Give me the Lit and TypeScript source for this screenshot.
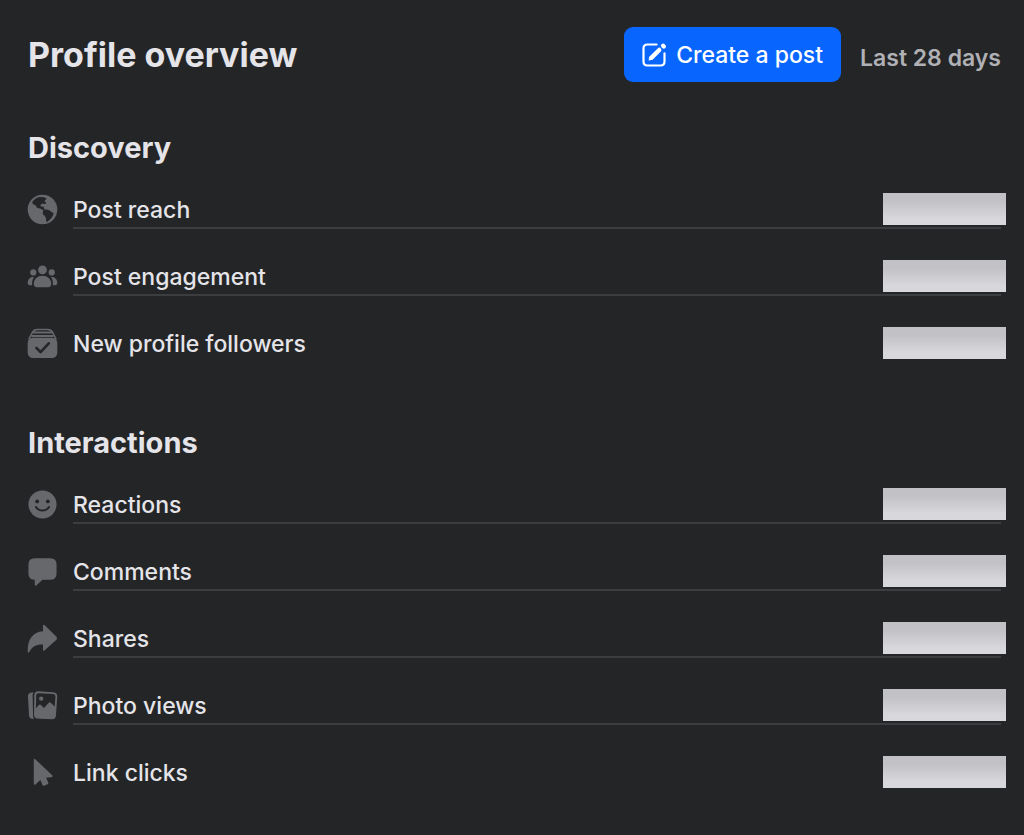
import { LitElement, html, svg, css, SVGTemplateResult } from "lit";
import { customElement, property } from "lit/decorators.js";

const icons: Record<string, SVGTemplateResult> = {
  globe: svg`
    <circle cx="16" cy="16" r="15.3" fill="currentColor" />
    <path fill="#242527" d="M5.200 8.800C6.800 5.800 9.500 3.800 12.800 3L17.600 3.400L20.200 4.600L19 6.200L17.800 7.400L19.800 8.800L19.400 10L17.400 10.400L16.200 9.800L14.200 10.800L13.800 12.400L15.400 13.200L17 13L17.400 14.800L18.600 16.200L20.600 16L23.400 17L25.200 18.600L27.400 19.600L26.800 22.200L25 25L22.600 27.400L20.800 28.800L19.600 27.800L19.800 25.200L18.400 22.800L16.400 21L16.200 18.600L17.200 17L15.400 16L13.600 15L11.400 14.800L9.600 13.400L8.800 11.400L7 11.200Z" />`,
  people: svg`
    <g fill="currentColor">
      <circle cx="16" cy="9.200" r="4.500" />
      <circle cx="6.500" cy="11.800" r="3.200" />
      <circle cx="25.500" cy="11.800" r="3.200" />
      <path d="M16 15.200C20.800 15.200 25 18.500 25 23.500C25 25.800 23.800 27 21.800 27H10.200C8.200 27 7 25.800 7 23.500C7 18.500 11.200 15.200 16 15.200Z" />
      <path d="M7.200 16.600C4 15.700 0.700 18.600 0.700 22.500C0.700 24.200 1.500 25 2.700 25H5.300C5 21.800 5.600 19 7.200 16.600Z" />
      <path d="M24.800 16.600C28 15.700 31.300 18.600 31.300 22.500C31.300 24.200 30.500 25 29.300 25H26.700C27 21.800 26.400 19 24.800 16.600Z" />
    </g>`,
  followers: svg`
    <rect x="0.700" y="10" width="30.600" height="21" rx="5.500" fill="currentColor" />
    <path d="M1.800 12L5.500 4.500Q7.500 1.500 10.500 1.500H21.500Q24.500 1.500 26.500 4.500L30.200 12" fill="none" stroke="currentColor" stroke-width="1.600" />
    <path d="M6 4.600H26M4.500 8.200H27.500" stroke="currentColor" stroke-width="2" />
    <path d="M9.700 20.500L14 25L22.500 15.800" fill="none" stroke="#242527" stroke-width="2.700" stroke-linecap="round" stroke-linejoin="round" />`,
  smile: svg`
    <circle cx="16" cy="16" r="14.500" fill="currentColor" />
    <circle cx="10.500" cy="12.800" r="2" fill="#242527" />
    <circle cx="21.500" cy="12.800" r="2" fill="#242527" />
    <path d="M9.300 18.500Q11.500 22.200 16 22.200T22.700 18.500" fill="none" stroke="#242527" stroke-width="2" stroke-linecap="round" />`,
  comment: svg`
    <path fill="currentColor" d="M8 2.200H24Q30.500 2.200 30.500 8.700V18.200Q30.500 24.500 24 24.500H16L9.500 30.500Q8 31.300 8 29.500V24.500Q1.500 24.500 1.500 18.200V8.700Q1.500 2.200 8 2.200Z" />`,
  share: svg`
    <path fill="currentColor" d="M16.500 3.200Q16.500 1 18.300 2.400L30.400 14.200Q31.700 15.700 30.400 17.200L18.300 28.200Q16.500 29.600 16.500 27.400V22.300C9.500 22 5.500 24.500 2.500 29.700Q0.800 32 0.700 28.500C0.700 17 6 9.200 16.500 8.500Z" />`,
  photo: svg`
    <path fill="currentColor" d="M1 6Q1 3.300 3.500 2.900L6.700 2.400Q5.700 4 5.800 6L6.300 27Q6.300 28.800 7.300 30L4.800 29.700Q2.300 29.300 2.100 26.700Z" />
    <path fill="none" stroke="currentColor" stroke-width="1.900" stroke-linejoin="round" d="M11.800 2.300L27 3.300Q30.500 3.600 30.300 7L28.900 26.500Q28.600 29.500 25.500 29.300L11 28.400Q8.100 28.100 8.200 25.200L8.500 5.300Q8.700 2.200 11.800 2.300Z" />
    <path fill="currentColor" d="M8.200 20L12.200 15.500Q13.300 14.500 14.400 15.500L17.500 18.500L22.200 13.300Q23.500 12.200 24.700 13.400L29.800 18L28.900 28L25 30L10 28.800L8.200 26Z" />
    <circle cx="14.700" cy="9" r="2.200" fill="currentColor" />`,
  pointer: svg`
    <path fill="currentColor" d="M7 3.200Q7 0.800 8.800 2.500L25.800 18.600Q27.500 20.500 25 20.800L19.700 21.400L22 26.400Q22.300 27.600 21.300 28.100L17.700 29.600Q16.500 29.900 16 28.800L13.800 23.800L9 28Q7 29.500 7 27Z" />`,
  compose: svg`
    <path d="M19 4H8.500Q4 4 4 8.500V23.500Q4 28 8.500 28H23.500Q28 28 28 23.500V14" fill="none" stroke="currentColor" stroke-width="2.500" stroke-linecap="round" />
    <path d="M13.200 19L22 10.200" fill="none" stroke="currentColor" stroke-width="5" stroke-linecap="round" />
    <path d="M10.600 17.500L14.500 21.500L9.800 22.400Z" fill="currentColor" />
    <path d="M26.400 5.400L27.200 6.200" fill="none" stroke="currentColor" stroke-width="5" stroke-linecap="round" />`,
};

const sections = [
  {
    title: "Discovery",
    metrics: [
      { icon: "globe", label: "Post reach" },
      { icon: "people", label: "Post engagement" },
      { icon: "followers", label: "New profile followers" },
    ],
  },
  {
    title: "Interactions",
    metrics: [
      { icon: "smile", label: "Reactions" },
      { icon: "comment", label: "Comments" },
      { icon: "share", label: "Shares" },
      { icon: "photo", label: "Photo views" },
      { icon: "pointer", label: "Link clicks" },
    ],
  },
];

@customElement("ui-icon")
export class UiIcon extends LitElement {
  @property() name = "";

  static styles = css`
    :host {
      display: block;
      flex: none;
      width: 31px;
      height: 31px;
    }
    .glyph {
      display: block;
      width: 100%;
      height: 100%;
    }
  `;

  render() {
    return html`<svg class="glyph" viewBox="0 0 32 32" aria-hidden="true">${icons[this.name]}</svg>`;
  }
}

@customElement("metric-section")
export class MetricSection extends LitElement {
  @property({ attribute: false }) section = sections[0];

  static styles = css`
    :host {
      display: block;
    }
    .title {
      margin: 0 0 23px;
      font-size: 29px;
      line-height: 40px;
      font-weight: 700;
    }
    .list {
      display: flex;
      flex-direction: column;
      gap: 29px;
      margin: 0;
      padding: 0;
      list-style: none;
    }
    .row {
      display: flex;
      gap: 15px;
      height: 38px;
    }
    .icon {
      color: #66686c;
      margin: 3px 0 0 -1px;
    }
    .body {
      flex: 1;
      display: flex;
      justify-content: space-between;
      border-bottom: 2px solid #3c3d40;
    }
    .row:last-child .body {
      border-bottom-color: transparent;
    }
    .label {
      font-size: 23px;
      line-height: 38px;
      font-weight: 500;
    }
    .value {
      width: 123px;
      height: 32px;
      margin: 2px -5px 0 0;
      background: linear-gradient(#c2c1c6 25%, #d8d7dc 80%);
    }
  `;

  render() {
    return html`
      <h2 class="title">${this.section.title}</h2>
      <ul class="list">
        ${this.section.metrics.map(
          (m) => html`
            <li class="row">
              <ui-icon class="icon" name=${m.icon}></ui-icon>
              <div class="body">
                <span class="label">${m.label}</span>
                <span class="value"></span>
              </div>
            </li>
          `
        )}
      </ul>
    `;
  }
}

@customElement("app-root")
export class AppRoot extends LitElement {
  static styles = css`
    :host {
      display: block;
      box-sizing: border-box;
      min-height: 100vh;
      padding: 27px 23px 24px 28px;
      background: #242527;
      color: #e4e4e9;
      font-family: Inter, "Liberation Sans", sans-serif;
    }
    .header {
      display: flex;
      align-items: center;
      gap: 19px;
      margin-bottom: 46px;
    }
    .heading {
      flex: 1;
      margin: 0;
      font-size: 34px;
      line-height: 44px;
      font-weight: 700;
    }
    .create {
      display: flex;
      align-items: center;
      gap: 8px;
      height: 55px;
      padding: 0 18px 0 16px;
      border: 0;
      border-radius: 9px;
      background: #0866ff;
      color: #fff;
      font: 500 23px/28px Inter, "Liberation Sans", sans-serif;
      cursor: pointer;
    }
    .compose {
      width: 28px;
      height: 28px;
    }
    .period {
      padding-top: 6px;
      color: #b0b1b5;
      font-size: 23px;
      line-height: 28px;
      font-weight: 600;
    }
    .sections {
      display: flex;
      flex-direction: column;
      gap: 60px;
    }
  `;

  render() {
    return html`
      <header class="header">
        <h1 class="heading">Profile overview</h1>
        <button class="create" type="button">
          <ui-icon class="compose" name="compose"></ui-icon>Create a post
        </button>
        <span class="period">Last 28 days</span>
      </header>
      <main class="sections">
        ${sections.map((s) => html`<metric-section .section=${s}></metric-section>`)}
      </main>
    `;
  }
}
